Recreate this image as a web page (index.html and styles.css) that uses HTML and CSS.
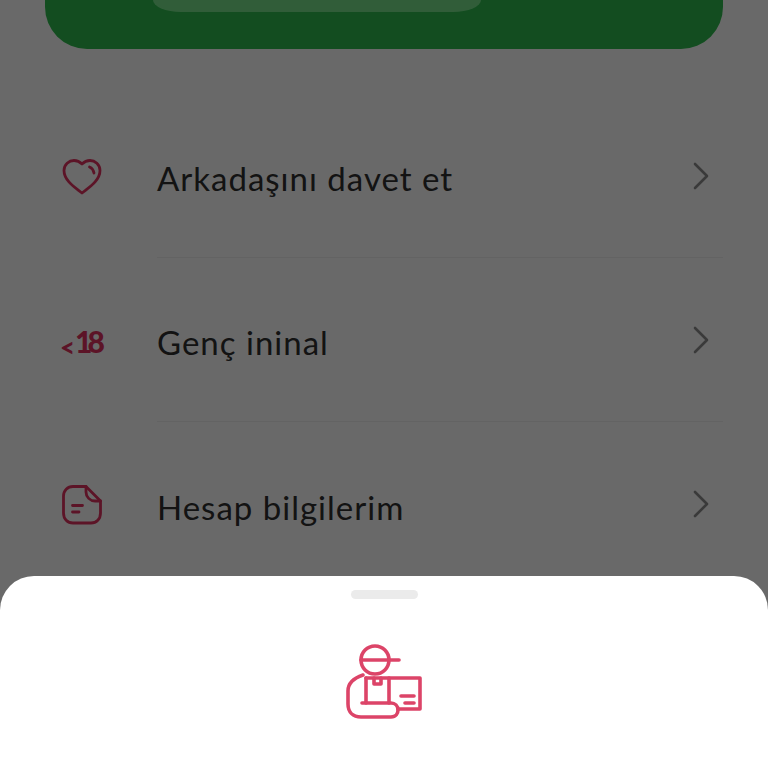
FILE: index.html
```html
<!DOCTYPE html>
<html lang="tr">
<head>
<meta charset="utf-8">
<title>Hesabım</title>
<link rel="stylesheet" href="styles.css">
</head>
<body>
<div class="screen">
  <div class="card"><div class="card-pill"></div></div>
  <ul class="menu">
    <li class="row">
      <svg class="row-icon" viewBox="0 -2 40 40"><path d="M20 35C14 30 2 23 2 12.500C2 6.500 7 2.500 12 2.500C15.500 2.500 18 4 20 6C22 4 24.500 2.500 28 2.500C33 2.500 38 6.500 38 12.500C38 23 26 30 20 35Z"/><path d="M27.500 9C30 10 31.500 12 32 15"/></svg>
      <div class="row-body"><span class="row-label">Arkadaşını davet et</span>
        <svg class="chevron" viewBox="0 0 16 28"><path d="M2 2L14 14L2 26"/></svg></div>
    </li>
    <li class="row">
      <svg class="row-icon row-icon-age" viewBox="0 0 40 24"><text class="age-lt" x="-2" y="29">&lt;</text><text class="age-num" x="13" y="25">18</text></svg>
      <div class="row-body"><span class="row-label">Genç ininal</span>
        <svg class="chevron" viewBox="0 0 16 28"><path d="M2 2L14 14L2 26"/></svg></div>
    </li>
    <li class="row">
      <svg class="row-icon" viewBox="0 -1 40 40"><path d="M24 1.500H11C5.500 1.500 1.500 5.500 1.500 11V28C1.500 34 5.500 38 11 38H29C34.500 38 38.500 34 38.500 28V16Z"/><path d="M24 1.500V7C24 12 28 16 33 16H38.500"/><path d="M10.500 20.500H20.500M10.500 27H17"/></svg>
      <div class="row-body row-body-last"><span class="row-label">Hesap bilgilerim</span>
        <svg class="chevron" viewBox="0 0 16 28"><path d="M2 2L14 14L2 26"/></svg></div>
    </li>
  </ul>
  <div class="scrim"></div>
  <div class="sheet">
    <div class="handle"></div>
    <svg class="sheet-icon" viewBox="0 0 76 76">
      <circle cx="29" cy="17" r="14"/>
      <path d="M15 17H53"/>
      <path d="M17 32C8 35 2 40 2 48V61C2 69 7 74 15 74H45C50 74 52 70 52 67C52 63 49 60 45 60H16"/>
      <path d="M20 35H74V66H52"/>
      <path d="M20 35V60M43 35V60"/>
      <path d="M28 35V41H35V35"/>
      <path d="M55 53H68M59 60H68" class="thin"/>
    </svg>
  </div>
</div>
</body>
</html>
```
FILE: styles.css
```css
* { box-sizing: border-box; }
html, body { margin: 0; padding: 0; }
body { background: #fff; font-family: "Lato", "Liberation Sans", sans-serif; }
.screen { position: relative; width: 768px; height: 768px; overflow: hidden; background: #fff; }
.card {
  height: 49px;
  margin: 0 45px;
  padding-left: 108px;
  background: #2fbc4e;
  border-radius: 0 0 42px 42px;
  display: flex;
}
.card-pill {
  width: 328px;
  height: 12px;
  background: #78e38c;
  border-radius: 0 0 28px 28px / 0 0 12px 12px;
}
.menu { list-style: none; margin: 45px 0 0; padding: 0 45px 0 62px; }
.row { display: flex; align-items: stretch; }
.row-icon {
  flex: none;
  width: 40px;
  height: 164px;
  margin-right: 55px;
  padding: 62px 0;
  fill: none;
  stroke: #e0325f;
  stroke-width: 2.800;
  stroke-linecap: round;
  stroke-linejoin: round;
  overflow: visible;
}
.row-body {
  flex: 1;
  height: 164px;
  display: flex;
  align-items: center;
  justify-content: space-between;
  padding: 0 14px 0 0;
  border-bottom: 1px solid #f0f0f0;
}
.row-label { font-size: 33px; color: #303030; letter-spacing: 1px; padding-top: 5px; }
.chevron {
  width: 16px;
  height: 28px;
  fill: none;
  stroke: #8e8e8e;
  stroke-width: 2.600;
  stroke-linecap: round;
  stroke-linejoin: round;
}
.row-body-last { border-bottom: none; }
.row-icon-age { stroke: none; padding: 70px 0; }
.age-lt { font-size: 26px; font-weight: 900; fill: #e0325f; font-family: "Lato", sans-serif; }
.age-num { font-size: 30px; font-weight: 900; letter-spacing: -5px; fill: #e0325f; font-family: "Lato", sans-serif; }
.scrim { position: absolute; inset: 0; background: rgba(0, 0, 0, .59); }
.sheet {
  position: absolute;
  left: 0;
  right: 0;
  bottom: 0;
  height: 192px;
  background: #fff;
  border-radius: 34px 34px 0 0;
  display: flex;
  flex-direction: column;
  align-items: center;
  padding-top: 14px;
}
.handle { width: 67px; height: 9px; border-radius: 5px; background: #ebebeb; }
.sheet-icon {
  width: 76px;
  height: 76px;
  margin-top: 44px;
  fill: none;
  stroke: #dc4468;
  stroke-width: 3.600;
  stroke-linecap: round;
  stroke-linejoin: round;
}
```
